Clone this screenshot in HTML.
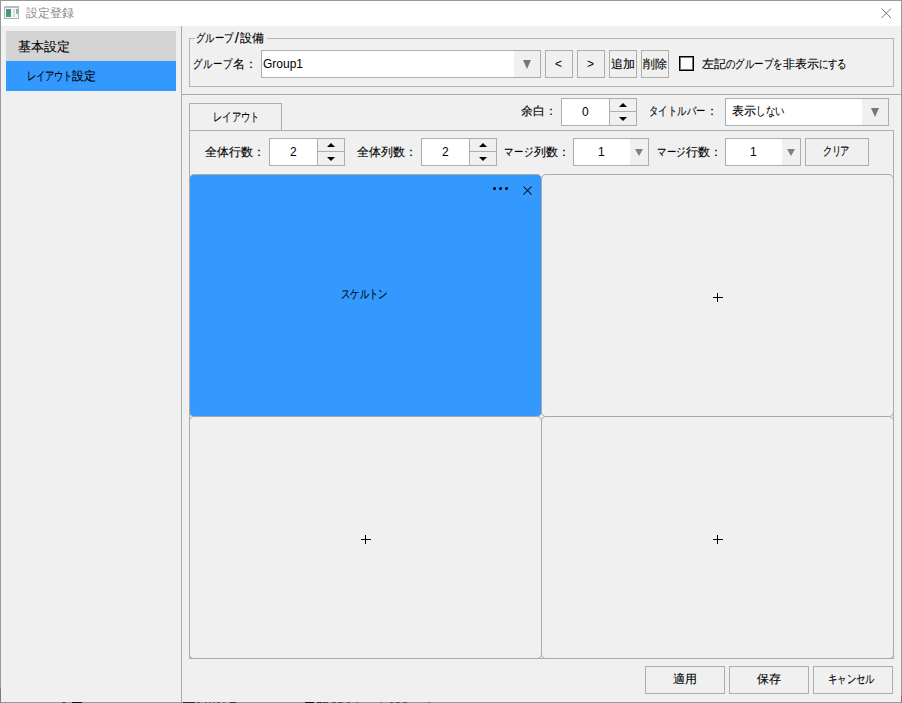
<!DOCTYPE html>
<html lang="ja">
<head>
<meta charset="utf-8">
<style>
html,body{margin:0;padding:0;}
body{width:902px;height:703px;position:relative;overflow:hidden;background:#f0f0f0;font-family:"Liberation Sans",sans-serif;font-size:12px;color:#000;}
.a{position:absolute;box-sizing:border-box;}
.t{position:absolute;white-space:nowrap;line-height:14px;transform-origin:0 0;-webkit-text-stroke:0.12px currentColor;}
.bd{border:1px solid #adadad;}
.w{background:#fff;}
.tri{position:absolute;width:0;height:0;border-left:4.5px solid transparent;border-right:4.5px solid transparent;border-top:9px solid #777;}
.tris{position:absolute;width:0;height:0;border-left:4px solid transparent;border-right:4px solid transparent;border-top:7px solid #808080;}
.up{position:absolute;width:0;height:0;border-left:4px solid transparent;border-right:4px solid transparent;border-bottom:4px solid #000;}
.dn{position:absolute;width:0;height:0;border-left:4px solid transparent;border-right:4px solid transparent;border-top:4px solid #000;}
.cell{position:absolute;box-sizing:border-box;border:1px solid #ababab;border-radius:5px;}
.plus{position:absolute;background:#000;}
.n{-webkit-text-stroke:0;}
.dot{position:absolute;width:3px;height:3px;background:#000;border-radius:50%;}
i{font-style:normal;display:inline-block;transform:scaleX(.78);margin:0 -1.5px;}
</style>
</head>
<body>
<!-- window frame -->
<div class="a" style="left:0;top:0;width:902px;height:703px;border:1px solid #999;"></div>
<!-- title bar -->
<div class="a" style="left:1px;top:1px;width:900px;height:25px;background:#fff;"></div>
<!-- app icon -->
<div class="a" style="left:4px;top:6px;width:15px;height:13px;border:1px solid #b0b4b8;border-top:2px solid #b8bcc0;background:#f6f6f6;"></div>
<div class="a" style="left:6px;top:9px;width:5px;height:8px;background:linear-gradient(160deg,#5f86c4,#3a9a70 50%,#48ad52);"></div>
<div class="a" style="left:13px;top:9px;width:2px;height:8px;background:#dedede;"></div>
<div class="a" style="left:16px;top:9px;width:2px;height:5px;background:linear-gradient(#7aa3d6,#8cc77a);"></div>
<div class="t n" id="title" style="left:26px;top:6px;color:#8c8c8c;">設定登録</div>
<!-- close X -->
<svg class="a" style="left:880px;top:7px;" width="12" height="12" viewBox="0 0 12 12"><path d="M1.5 1.5L11 11M11 1.5L1.5 11" stroke="#777" stroke-width="1"/></svg>

<!-- left list -->
<div class="a" style="left:6px;top:31px;width:170px;height:30px;background:#d4d4d4;"></div>
<div class="a" style="left:6px;top:61px;width:170px;height:30px;background:#3399ff;"></div>
<div class="t" id="l1" style="left:18px;top:40px;font-size:13px;">基本設定</div>
<div class="t" id="l2" style="left:27px;top:69px;"><i>レ</i><i>イ</i><i>ア</i><i>ウ</i><i>ト</i>設定</div>

<!-- separators -->
<div class="a" style="left:181px;top:26px;width:1px;height:676px;background:#aaaaaa;"></div>
<div class="a" style="left:182px;top:94px;width:719px;height:1px;background:#aaaaaa;"></div>

<!-- group box -->
<div class="a" style="left:189px;top:38px;width:705px;height:49px;border:1px solid #b4b4b4;"></div>
<div class="a" style="left:195px;top:30px;width:72px;height:16px;background:#f0f0f0;"></div>
<div class="t" id="gtitle" style="left:196px;top:31px;"><i style="margin:0 -1.30px">グ</i><i style="margin:0 -1.30px">ル</i><i style="margin:0 -1.30px">ー</i><i style="margin:0 -1.30px">プ</i><span style="margin:0 1px 0 1px;font-size:15px;line-height:12px;display:inline-block;transform:translateY(1px)">/</span>設備</div>
<div class="t" id="gname" style="left:193px;top:57px;"><i style="margin:0 -1.00px">グ</i><i style="margin:0 -1.00px">ル</i><i style="margin:0 -1.00px">ー</i><i style="margin:0 -1.00px">プ</i>名：</div>
<div class="a bd w" style="left:261px;top:50px;width:280px;height:28px;"></div>
<div class="a" style="left:514px;top:51px;width:26px;height:26px;background:#f0f0f0;"></div>
<div class="tri" style="left:523px;top:60px;"></div>
<div class="t n" id="group1" style="left:263px;top:57px;">Group1</div>
<div class="a bd" style="left:545px;top:50px;width:28px;height:28px;"></div>
<div class="a bd" style="left:577px;top:50px;width:28px;height:28px;"></div>
<div class="a bd" style="left:609px;top:50px;width:28px;height:28px;"></div>
<div class="a bd" style="left:641px;top:50px;width:28px;height:28px;"></div>
<div class="t n" id="lt" style="left:555px;top:57px;">&lt;</div>
<div class="t n" id="gt" style="left:587px;top:57px;">&gt;</div>
<div class="t" id="add" style="left:611px;top:57px;">追加</div>
<div class="t" id="del" style="left:643px;top:57px;">削除</div>
<div class="a" style="left:679px;top:56px;width:15px;height:15px;border:1px solid #000;box-shadow:inset 0 0 0 1px rgba(0,0,0,.55);background:#fff;"></div>
<div class="t" id="hide" style="left:702px;top:57px;">左記<i style="margin:0 -1.28px">の</i><i style="margin:0 -1.28px">グ</i><i style="margin:0 -1.28px">ル</i><i style="margin:0 -1.28px">ー</i><i style="margin:0 -1.28px">プ</i><i style="margin:0 -1.28px">を</i>非表示<i style="margin:0 -1.28px">に</i><i style="margin:0 -1.28px">す</i><i style="margin:0 -1.28px">る</i></div>

<!-- tab -->
<div class="a" style="left:189px;top:103px;width:93px;height:28px;border:1px solid #adadad;"></div>
<div class="t" id="tab" style="left:213px;top:110px;"><i style="margin:0 -1.30px">レ</i><i style="margin:0 -1.30px">イ</i><i style="margin:0 -1.30px">ア</i><i style="margin:0 -1.30px">ウ</i><i style="margin:0 -1.30px">ト</i></div>
<!-- panel -->
<div class="a" style="left:189px;top:130px;width:705px;height:529px;border:1px solid #adadad;"></div>

<!-- margin spin -->
<div class="t" id="yohaku" style="left:521px;top:104px;">余白：</div>
<div class="a bd w" style="left:561px;top:98px;width:76px;height:28px;"></div>
<div class="a" style="left:609px;top:99px;width:1px;height:26px;background:#adadad;"></div>
<div class="a" style="left:610px;top:99px;width:26px;height:26px;background:#f0f0f0;"></div>
<div class="a" style="left:610px;top:111px;width:26px;height:1px;background:#adadad;"></div>
<div class="up" style="left:619px;top:103px;"></div>
<div class="dn" style="left:619px;top:117px;"></div>
<div class="t n" id="zero" style="left:582px;top:105px;">0</div>

<!-- titlebar combo -->
<div class="t" id="tbar" style="left:649px;top:104px;"><i style="margin:0 -1.25px">タ</i><i style="margin:0 -1.25px">イ</i><i style="margin:0 -1.25px">ト</i><i style="margin:0 -1.25px">ル</i><i style="margin:0 -1.25px">バ</i><i style="margin:0 -1.25px">ー</i>：</div>
<div class="a bd w" style="left:725px;top:98px;width:164px;height:28px;"></div>
<div class="a" style="left:862px;top:99px;width:26px;height:26px;background:#f0f0f0;"></div>
<div class="tri" style="left:871px;top:108px;"></div>
<div class="t" id="hyouji" style="left:732px;top:104px;">表示<i style="margin:0 -1.17px">し</i><i style="margin:0 -1.17px">な</i><i style="margin:0 -1.17px">い</i></div>

<!-- row 2 -->
<div class="t" id="r2a" style="left:205px;top:145px;">全体行数：</div>
<div class="a bd w" style="left:269px;top:138px;width:76px;height:28px;"></div>
<div class="a" style="left:317px;top:139px;width:1px;height:26px;background:#adadad;"></div>
<div class="a" style="left:318px;top:139px;width:26px;height:26px;background:#f0f0f0;"></div>
<div class="a" style="left:318px;top:151px;width:26px;height:1px;background:#adadad;"></div>
<div class="up" style="left:327px;top:143px;"></div>
<div class="dn" style="left:327px;top:157px;"></div>
<div class="t n" id="v2a" style="left:290px;top:145px;">2</div>

<div class="t" id="r2b" style="left:357px;top:145px;">全体列数：</div>
<div class="a bd w" style="left:421px;top:138px;width:76px;height:28px;"></div>
<div class="a" style="left:469px;top:139px;width:1px;height:26px;background:#adadad;"></div>
<div class="a" style="left:470px;top:139px;width:26px;height:26px;background:#f0f0f0;"></div>
<div class="a" style="left:470px;top:151px;width:26px;height:1px;background:#adadad;"></div>
<div class="up" style="left:479px;top:143px;"></div>
<div class="dn" style="left:479px;top:157px;"></div>
<div class="t n" id="v2b" style="left:442px;top:145px;">2</div>

<div class="t" id="r2c" style="left:504px;top:145px;"><i style="margin:0 -1.00px">マ</i><i style="margin:0 -1.00px">ー</i><i style="margin:0 -1.00px">ジ</i>列数：</div>
<div class="a bd w" style="left:573px;top:138px;width:76px;height:28px;"></div>
<div class="a" style="left:630px;top:139px;width:18px;height:26px;background:#f0f0f0;"></div>
<div class="tris" style="left:635px;top:149px;"></div>
<div class="t n" id="v2c" style="left:598px;top:145px;">1</div>

<div class="t" id="r2d" style="left:657px;top:145px;"><i style="margin:0 -1.17px">マ</i><i style="margin:0 -1.17px">ー</i><i style="margin:0 -1.17px">ジ</i>行数：</div>
<div class="a bd w" style="left:725px;top:138px;width:76px;height:28px;"></div>
<div class="a" style="left:782px;top:139px;width:18px;height:26px;background:#f0f0f0;"></div>
<div class="tris" style="left:787px;top:149px;"></div>
<div class="t n" id="v2d" style="left:750px;top:145px;">1</div>

<div class="a bd" style="left:805px;top:138px;width:64px;height:28px;"></div>
<div class="t" id="clear" style="left:824px;top:144px;"><i style="margin:0 -1.83px">ク</i><i style="margin:0 -1.83px">リ</i><i style="margin:0 -1.83px">ア</i></div>

<!-- cells -->
<div class="cell" style="left:189px;top:174px;width:353px;height:243px;background:#3399ff;"></div>
<div class="cell" style="left:541px;top:174px;width:353px;height:243px;"></div>
<div class="cell" style="left:189px;top:416px;width:353px;height:243px;"></div>
<div class="cell" style="left:541px;top:416px;width:353px;height:243px;"></div>
<!-- dots and x -->
<div class="dot" style="left:493px;top:187px;"></div>
<div class="dot" style="left:499px;top:187px;"></div>
<div class="dot" style="left:505px;top:187px;"></div>
<svg class="a" style="left:522px;top:185px;" width="11" height="11" viewBox="0 0 11 11"><path d="M1.5 1.5L9.5 9.5M9.5 1.5L1.5 9.5" stroke="#000" stroke-width="1.05"/></svg>
<div class="t" id="skel" style="left:341px;top:287px;"><i style="margin:0 -1.30px">ス</i><i style="margin:0 -1.30px">ケ</i><i style="margin:0 -1.30px">ル</i><i style="margin:0 -1.30px">ト</i><i style="margin:0 -1.30px">ン</i></div>
<div class="plus" style="left:713px;top:297px;width:10px;height:1px;"></div>
<div class="plus" style="left:717px;top:293px;width:1px;height:9px;"></div>
<div class="plus" style="left:361px;top:539px;width:10px;height:1px;"></div>
<div class="plus" style="left:365px;top:535px;width:1px;height:9px;"></div>
<div class="plus" style="left:713px;top:539px;width:10px;height:1px;"></div>
<div class="plus" style="left:717px;top:535px;width:1px;height:9px;"></div>

<!-- bottom buttons -->
<div class="a bd" style="left:645px;top:666px;width:80px;height:28px;"></div>
<div class="a bd" style="left:729px;top:666px;width:80px;height:28px;"></div>
<div class="a bd" style="left:813px;top:666px;width:80px;height:28px;"></div>
<div class="t" id="apply" style="left:673px;top:672px;">適用</div>
<div class="t" id="save" style="left:757px;top:672px;">保存</div>
<div class="t" id="cancel" style="left:828px;top:672px;"><i style="margin:0 -1.30px">キ</i><i style="margin:0 -1.30px">ャ</i><i style="margin:0 -1.30px">ン</i><i style="margin:0 -1.30px">セ</i><i style="margin:0 -1.30px">ル</i></div>
<div class="a" style="left:0;top:688px;width:1px;height:15px;background:#7a7a7a;"></div>
<div class="a" style="left:901px;top:696px;width:1px;height:7px;background:#7a7a7a;"></div>
<!-- bottom residue -->
<div class="a" style="left:62px;top:702px;width:4px;height:1px;background:#5a4a70;"></div>
<div class="a" style="left:72px;top:702px;width:10px;height:1px;background:#111;"></div>
<div class="a" style="left:183px;top:702px;width:12px;height:1px;background:#2a2a2a;"></div>
<div class="a" style="left:197px;top:702px;width:3px;height:1px;background:#555;"></div>
<div class="a" style="left:205px;top:702px;width:2px;height:1px;background:#666;"></div>
<div class="a" style="left:209px;top:702px;width:2px;height:1px;background:#666;"></div>
<div class="a" style="left:213px;top:702px;width:2px;height:1px;background:#666;"></div>
<div class="a" style="left:217px;top:702px;width:3px;height:1px;background:#555;"></div>
<div class="a" style="left:223px;top:702px;width:2px;height:1px;background:#666;"></div>
<div class="a" style="left:230px;top:702px;width:6px;height:1px;background:#333;"></div>
<div class="a" style="left:305px;top:702px;width:9px;height:1px;background:#111;"></div>
<div class="a" style="left:317px;top:702px;width:5px;height:1px;background:#333;"></div>
<div class="a" style="left:323px;top:702px;width:5px;height:1px;background:#444;"></div>
<div class="a" style="left:332px;top:702px;width:4px;height:1px;background:#555;"></div>
<div class="a" style="left:338px;top:702px;width:5px;height:1px;background:#555;"></div>
<div class="a" style="left:347px;top:702px;width:3px;height:1px;background:#555;"></div>
<div class="a" style="left:356px;top:702px;width:2px;height:1px;background:#666;"></div>
<div class="a" style="left:380px;top:702px;width:2px;height:1px;background:#777;"></div>
<div class="a" style="left:390px;top:702px;width:3px;height:1px;background:#555;"></div>
<div class="a" style="left:396px;top:702px;width:4px;height:1px;background:#555;"></div>
<div class="a" style="left:403px;top:702px;width:4px;height:1px;background:#555;"></div>
<div class="a" style="left:428px;top:702px;width:2px;height:1px;background:#666;"></div>
</body>
</html>
